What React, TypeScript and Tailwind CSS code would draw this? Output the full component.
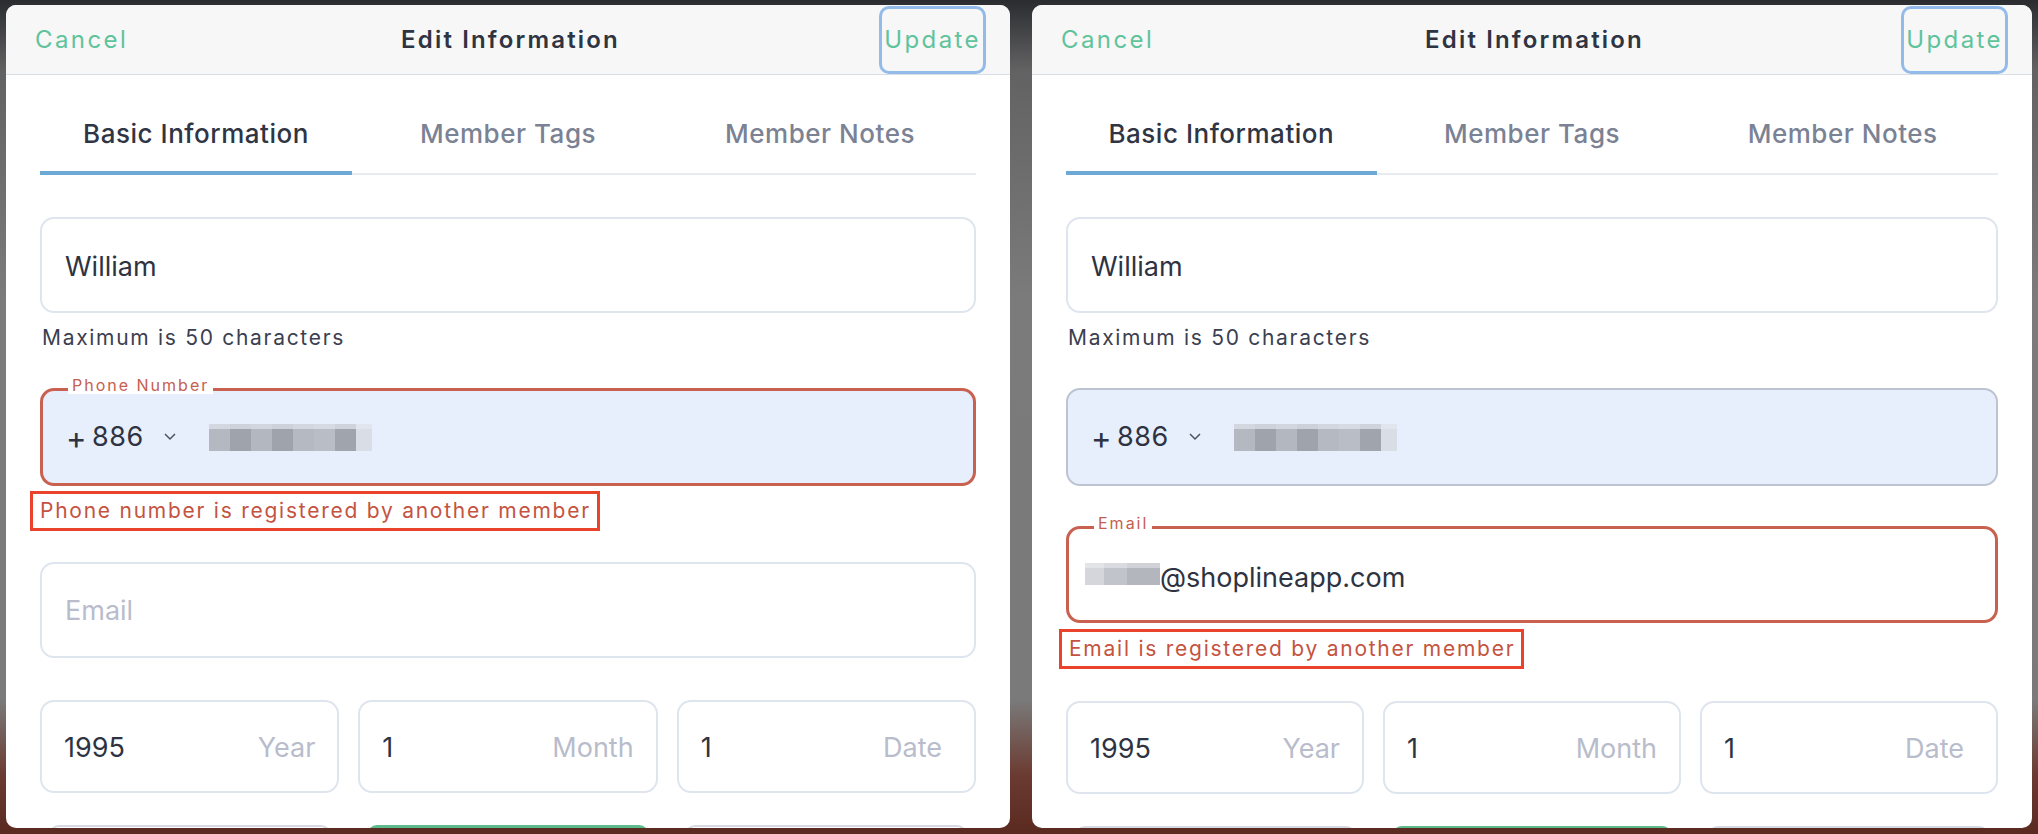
import type { ReactNode } from 'react';

type Variant = 'phone' | 'email';

const tabs = ['Basic Information', 'Member Tags', 'Member Notes'];

const phoneTop = ['#d3d7df', '#ced2da', '#d2d6de', '#cdd1d9', '#d3d7df', '#d6dae2', '#cfd3db', '#e1e5ed'];
const phoneBottom = ['#b4b8c1', '#9fa3ac', '#b3b7c0', '#9fa3ac', '#b4b9c2', '#b9bdc6', '#a0a4ad', '#d9dde5'];
const phoneWidths = [21, 21, 21, 21, 21, 21, 21, 16];

function PhoneMosaic() {
  return (
    <div className="flex h-[27px] w-[163px] flex-col">
      <div className="flex h-[5px]">
        {phoneTop.map((c, i) => (
          <span key={i} className="h-full" style={{ width: phoneWidths[i], background: c }} />
        ))}
      </div>
      <div className="flex h-[22px]">
        {phoneBottom.map((c, i) => (
          <span key={i} className="h-full" style={{ width: phoneWidths[i], background: c }} />
        ))}
      </div>
    </div>
  );
}

function EmailMosaic() {
  return (
    <div className="flex h-[22px] w-[75px] flex-col">
      <div className="flex h-[5px]">
        <span className="w-[19px] bg-[#e3e4e8]" />
        <span className="w-[23px] bg-[#dadbe0]" />
        <span className="w-[33px] bg-[#d0d2d7]" />
      </div>
      <div className="flex h-[17px]">
        <span className="w-[19px] bg-[#d4d6db]" />
        <span className="w-[23px] bg-[#c2c4cb]" />
        <span className="w-[33px] bg-[#b3b6bd]" />
      </div>
    </div>
  );
}

function FloatingLabel({ children }: { children: ReactNode }) {
  return (
    <span className="absolute -top-[15px] left-[25px] bg-white px-[4px] text-[16px] leading-[18px] tracking-[2px] text-[#c5604e]">
      {children}
    </span>
  );
}

function ErrorNote({ children, className }: { children: ReactNode; className: string }) {
  return (
    <div
      className={`flex h-[40px] w-fit items-center border-[3px] border-[#e9432c] pl-[7px] pr-[6px] text-[21px] tracking-[1.75px] text-[#c4533f] ${className}`}
    >
      {children}
    </div>
  );
}

function PhoneField({ error }: { error: boolean }) {
  return (
    <div
      className={`relative flex h-[98px] items-center rounded-[14px] bg-[#e8effc] pl-[23px] text-[27px] text-[#2e3342] ${
        error ? 'border-[3px] border-[#c8614f]' : 'border-2 border-[#bcc4d2]'
      }`}
    >
      {error && <FloatingLabel>Phone Number</FloatingLabel>}
      <span className="w-[26px] text-[31px] leading-none">+</span>
      <span className="tracking-[0.5px]">886</span>
      <svg width="12" height="8" viewBox="0 0 12 8" className="ml-[20px] mr-[33px]" fill="none">
        <polyline points="1,1 6,6 11,1" stroke="#4b5162" strokeWidth="1.5" />
      </svg>
      <PhoneMosaic />
    </div>
  );
}

function EmailField({ error }: { error: boolean }) {
  if (!error) {
    return (
      <div className="flex h-[96px] items-center rounded-[14px] border-2 border-[#dfe5ee] pl-[23px] pt-[2px] text-[27px] text-[#b8bccb]">
        Email
      </div>
    );
  }
  return (
    <div className="relative flex h-[97px] items-center rounded-[14px] border-[3px] border-[#c8614f] pl-[16px] text-[27px] text-[#2e3342]">
      <FloatingLabel>Email</FloatingLabel>
      <div className="-mt-[2px]">
        <EmailMosaic />
      </div>
      <span className="mt-[8px]">@shoplineapp.com</span>
    </div>
  );
}

function DateBox({ value, unit, last }: { value: string; unit: string; last?: boolean }) {
  return (
    <div
      className={`flex h-[93px] items-center justify-between rounded-[14px] border-2 border-[#dfe5ee] pl-[22px] pt-[3px] text-[27px] ${
        last ? 'pr-[32px]' : 'pr-[22px]'
      }`}
    >
      <span className="text-[#2e3342]">{value}</span>
      <span className="text-[#b8bccb]">{unit}</span>
    </div>
  );
}

function EditPanel({ variant }: { variant: Variant }) {
  const phoneError = variant === 'phone';

  return (
    <section
      className={`flex h-[823px] shrink-0 flex-col overflow-hidden rounded-[10px] bg-white ${
        phoneError ? 'w-[1004px]' : 'w-[1000px]'
      }`}
    >
      <header className="grid h-[70px] shrink-0 grid-cols-[1fr_auto_1fr] items-center border-b border-[#d9dfe7] bg-[#f7f7f8] pl-[29px] pr-[24px]">
        <button type="button" className="justify-self-start text-[24px] tracking-[0.1em] text-[#5fc39b]">
          Cancel
        </button>
        <h1 className="text-[24px] font-semibold tracking-[0.09em] text-[#2f3442]">Edit Information</h1>
        <button
          type="button"
          className="h-[68px] justify-self-end rounded-[10px] border-[3px] border-[#92bbe9] px-[2px] text-[24px] tracking-[0.1em] text-[#5fc39b]"
        >
          Update
        </button>
      </header>

      <div className="px-[34px]">
        <nav className="flex border-b-2 border-[#e8ecf1]">
          {tabs.map((t, i) => (
            <div
              key={t}
              className={`-mb-[2px] flex h-[100px] flex-1 justify-center border-b-4 pt-[44px] text-[26px] font-medium leading-[30px] tracking-[0.02em] ${
                i === 0 ? 'border-[#6ca9d5] text-[#2f3544]' : 'border-transparent text-[#7a8294]'
              }`}
            >
              {t}
            </div>
          ))}
        </nav>

        <div className="mt-[42px] flex h-[96px] items-center rounded-[14px] border-2 border-[#dfe5ee] pl-[23px] pt-[5px] text-[27px] text-[#2e3342]">
          William
        </div>
        <p className="mt-[12px] pl-[2px] text-[21px] leading-[26px] tracking-[1.7px] text-[#3a4050]">
          Maximum is 50 characters
        </p>

        <div className="mt-[37px]">
          <PhoneField error={phoneError} />
        </div>

        {phoneError ? (
          <>
            <ErrorNote className="-ml-[10px] mt-[5px]">Phone number is registered by another member</ErrorNote>
            <div className="mt-[31px]">
              <EmailField error={false} />
            </div>
            <div className="mt-[42px] grid grid-cols-3 gap-[19px]">
              <DateBox value="1995" unit="Year" />
              <DateBox value="1" unit="Month" />
              <DateBox value="1" unit="Date" last />
            </div>
          </>
        ) : (
          <>
            <div className="mt-[40px]">
              <EmailField error />
            </div>
            <ErrorNote className="-ml-[7px] mt-[6px]">Email is registered by another member</ErrorNote>
            <div className="mt-[32px] grid grid-cols-3 gap-[19px]">
              <DateBox value="1995" unit="Year" />
              <DateBox value="1" unit="Month" />
              <DateBox value="1" unit="Date" last />
            </div>
          </>
        )}

        <div className="mx-[9px] mt-[32px] grid grid-cols-3 gap-[36px]">
          <div className="h-[60px] rounded-[10px] border-2 border-[#d5dae2] bg-white" />
          <div className="h-[60px] rounded-[10px] bg-[#5dba8b]" />
          <div className="h-[60px] rounded-[10px] border-2 border-[#d5dae2] bg-white" />
        </div>
      </div>
    </section>
  );
}

export default function App() {
  return (
    <div className="flex h-[834px] w-[2038px] gap-[22px] overflow-hidden bg-[linear-gradient(180deg,#2b2c30_0px,#3a3b3e_20px,#626263_70px,#7b7b7b_300px,#7a7a7a_700px,#6b3b31_775px,#5a2a21_834px)] px-[6px] pt-[5px] font-['Inter','Liberation_Sans',sans-serif]">
      <EditPanel variant="phone" />
      <EditPanel variant="email" />
    </div>
  );
}
